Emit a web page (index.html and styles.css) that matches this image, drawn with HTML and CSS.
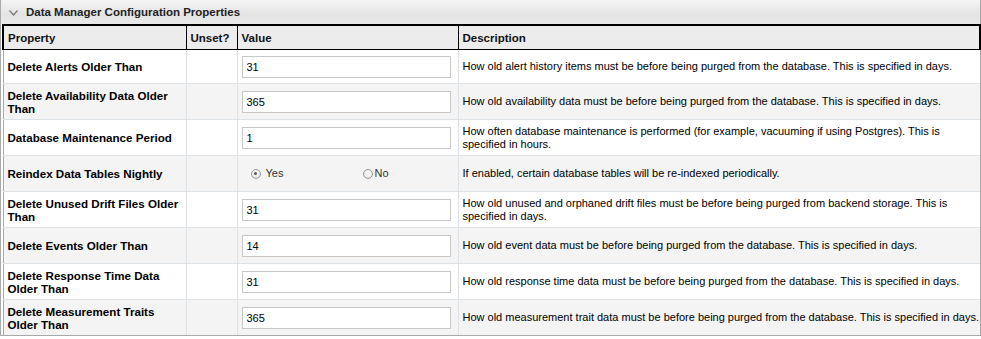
FILE: index.html
```html
<!DOCTYPE html>
<html>
<head>
<meta charset="utf-8">
<link rel="stylesheet" href="styles.css">
</head>
<body>
<div class="panel">
  <div class="section-head">
    <svg class="chev" width="9" height="6" viewBox="0 0 9 6"><path d="M0.5 0.5 L4.5 5 L8.5 0.5" fill="none" stroke="#777" stroke-width="1.2"/></svg>
    <span>Data Manager Configuration Properties</span>
  </div>
  <table class="props">
    <colgroup>
      <col class="c-prop"><col class="c-unset"><col class="c-val"><col class="c-desc">
    </colgroup>
    <thead>
      <tr><th>Property</th><th>Unset?</th><th>Value</th><th>Description</th></tr>
    </thead>
    <tbody>
      <tr class="r1"><td class="name">Delete Alerts Older Than</td><td></td><td><input class="field" value="31"></td><td class="desc">How old alert history items must be before being purged from the database. This is specified in days.</td></tr>
      <tr><td class="name">Delete Availability Data Older Than</td><td></td><td><input class="field" value="365"></td><td class="desc">How old availability data must be before being purged from the database. This is specified in days.</td></tr>
      <tr><td class="name">Database Maintenance Period</td><td></td><td><input class="field" value="1"></td><td class="desc">How often database maintenance is performed (for example, vacuuming if using Postgres). This is specified in hours.</td></tr>
      <tr><td class="name">Reindex Data Tables Nightly</td><td></td><td><div class="radios"><label class="radio"><span class="dot on"></span>Yes</label><label class="radio"><span class="dot"></span>No</label></div></td><td class="desc">If enabled, certain database tables will be re-indexed periodically.</td></tr>
      <tr><td class="name">Delete Unused Drift Files Older Than</td><td></td><td><input class="field" value="31"></td><td class="desc">How old unused and orphaned drift files must be before being purged from backend storage. This is specified in days.</td></tr>
      <tr><td class="name">Delete Events Older Than</td><td></td><td><input class="field" value="14"></td><td class="desc">How old event data must be before being purged from the database. This is specified in days.</td></tr>
      <tr><td class="name">Delete Response Time Data Older Than</td><td></td><td><input class="field" value="31"></td><td class="desc">How old response time data must be before being purged from the database. This is specified in days.</td></tr>
      <tr><td class="name">Delete Measurement Traits Older Than</td><td></td><td><input class="field" value="365"></td><td class="desc">How old measurement trait data must be before being purged from the database. This is specified in days.</td></tr>
    </tbody>
  </table>
</div>
</body>
</html>
```
FILE: styles.css
```css
html, body {
  margin: 0;
  padding: 0;
  background: #fff;
}
body {
  font-family: "Liberation Sans", Arial, sans-serif;
  font-size: 11px;
  color: #000;
}
.panel {
  width: 979px;
  border-left: 1px solid #a9a9a9;
  border-right: 1px solid #a9a9a9;
  border-bottom: 1px solid #a9a9a9;
}
.section-head {
  height: 24px;
  display: flex;
  align-items: center;
  gap: 8px;
  padding-left: 8px;
  background: linear-gradient(#f4f4f4, #e4e4e4 60%, #e9e9e9);
  font-weight: bold;
  font-size: 11.5px;
  color: #222;
}
.chev { flex: none; margin-top: 1px; }
.props {
  border-collapse: collapse;
  table-layout: fixed;
  width: 977px;
  margin-left: 1px;
}
.c-prop { width: 183px; }
.c-unset { width: 51px; }
.c-val { width: 221px; }
.c-desc { width: 522px; }
.props th {
  background: #ececec;
  border: 1px solid #000;
  border-top-width: 2px;
  text-align: left;
  font-size: 11.5px;
  font-weight: bold;
  height: 23px;
  padding: 0 4px;
  color: #111;
}
.props th:first-child { border-left-width: 2px; }
.props th:last-child { border-right-width: 2px; }
.props td {
  border: 1px solid #dde2e6;
  height: 35px;
  padding: 0 4px;
  vertical-align: middle;
  line-height: 13px;
}
.props td.desc { padding-right: 1px; }
.props tr.r1 td { height: 33px; }
.props td:first-child { border-left: 1px solid #a9a9a9; }
.props td:last-child { border-right: none; }
.props tbody tr:last-child td { border-bottom: none; }
.props tbody tr:nth-child(even) td { background: #f4f4f4; }
.props tbody tr:nth-child(odd) td { background: #fff; }
.name {
  font-weight: bold;
  font-size: 11.6px;
}
.field {
  box-sizing: border-box;
  display: block;
  width: 209px;
  height: 22px;
  margin: 0;
  border: 1px solid #c8c8c8;
  background: #fff;
  font-family: "Liberation Sans", Arial, sans-serif;
  font-size: 11px;
  padding: 0 4px;
  color: #000;
}
.radios {
  display: flex;
  padding-left: 9px;
}
.radio {
  flex: none;
  display: flex;
  align-items: center;
  gap: 5px;
  width: 112px;
  color: #333;
}
.radio + .radio { gap: 2px; }
.dot {
  box-sizing: border-box;
  width: 10px;
  height: 10px;
  border-radius: 50%;
  border: 1px solid #9a9a9a;
  background: radial-gradient(circle at 50% 40%, #fff, #dedede);
  position: relative;
}
.dot.on::after {
  content: "";
  position: absolute;
  left: 2.5px;
  top: 2.5px;
  width: 3px;
  height: 3px;
  border-radius: 50%;
  background: #555;
}
```
